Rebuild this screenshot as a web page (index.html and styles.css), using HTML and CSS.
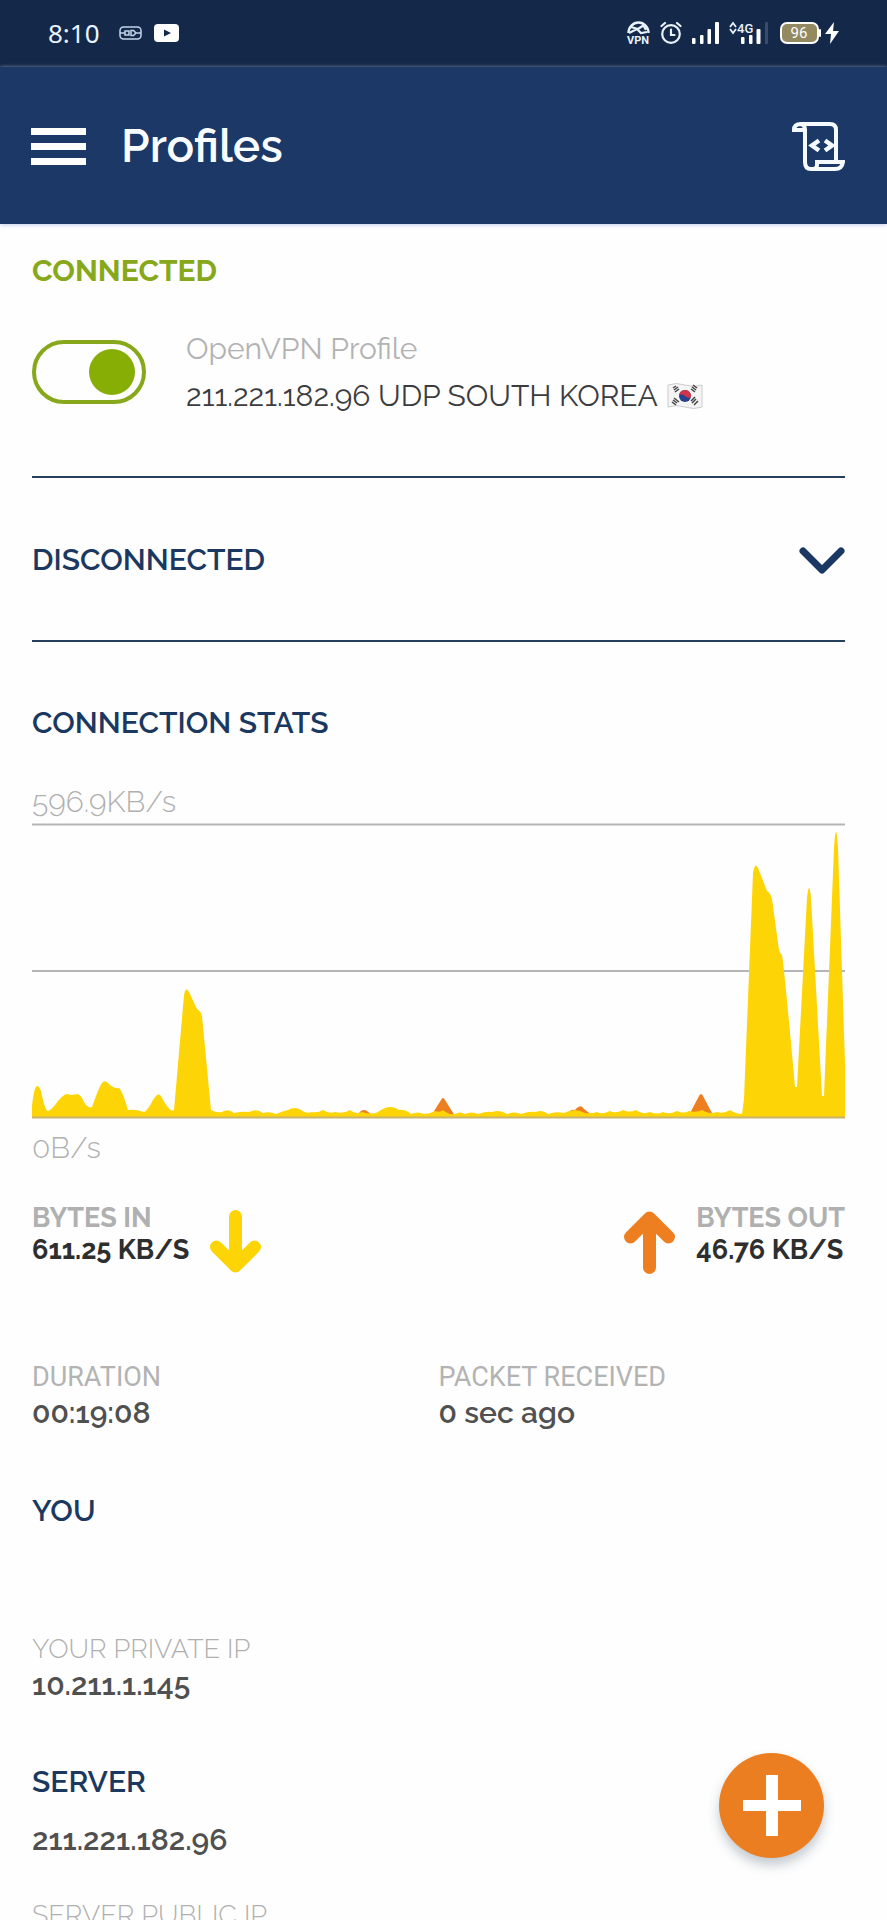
FILE: index.html
```
<!DOCTYPE html>
<html lang="en">

<head>
  <meta charset="UTF-8" />
  <meta name="viewport" content="width=device-width, initial-scale=1" />
  <title>Profiles</title>
  <link rel="stylesheet" href="styles.css">
</head>

<body>

  <div class="app">
    <!-- Phone status bar -->
    <div class="statusbar">
      <div class="status-group status-left">
        <span class="clock">8:10</span>
        <svg width="23" height="14" viewBox="0 0 23 14" fill="none" stroke="#c3d5ea" stroke-width="1.5">
          <rect x="1" y="1" width="21" height="12" rx="3.5" />
          <path d="M1 7h5M17 7h5M6 5h4v4H6zM12 4.500h2.500l2.500 2.500-2.500 2.500H12z" />
        </svg>
        <svg width="25" height="18" viewBox="0 0 25 18">
          <rect width="25" height="18" rx="4" fill="#fff" />
          <path d="M10 5.500v7l7-3.500z" fill="#14294a" />
        </svg>
      </div>
      <div class="status-group status-right">
        <svg class="icon-vpn" width="23" height="24" viewBox="0 0 23 24">
          <path d="M1.500 12a10 10.500 0 0 1 20 0" fill="none" stroke="#e9f2fb" stroke-width="2.400" />
          <path d="M4 6l7 2 6-4M2 12l8-4 4 4 6-1M16 4l3 5" fill="none" stroke="#e9f2fb" stroke-width="2.200" />
          <text class="vpn-text" x="11" y="23" text-anchor="middle">VPN</text>
        </svg>
        <svg width="22" height="24" viewBox="0 0 22 24" fill="none" stroke="#e9f2fb" stroke-width="2.200" stroke-linecap="round">
          <circle cx="11" cy="13" r="8.800" />
          <path d="M11 8.500V14h3.500M1.500 5l3.500-3M20.500 5L17 2" />
        </svg>
        <svg width="27" height="23" viewBox="0 0 27 23" fill="#fff">
          <rect x="0" y="16" width="3.500" height="6" rx="1" />
          <rect x="8" y="13" width="3.500" height="9" rx="1" />
          <rect x="15.500" y="7" width="3.500" height="15" rx="1" />
          <rect x="23" y="0" width="4" height="22" rx="1" />
        </svg>
        <svg width="39" height="24" viewBox="0 0 39 24" fill="#fff">
          <path d="M1 6l3-4 3 4M1 8l3 4 3-4" fill="none" stroke="#e9f2fb" stroke-width="1.800" />
          <text class="net-text" x="8" y="12">4G</text>
          <rect x="12" y="16" width="3.500" height="7" rx="1" />
          <rect x="20" y="14" width="3.500" height="9" rx="1" />
          <rect x="27.500" y="8" width="4" height="15" rx="1" />
          <rect x="36" y="1" width="3" height="22" rx="1" fill="#3a4c6b" />
        </svg>
        <svg class="icon-battery" width="41" height="22" viewBox="0 0 41 22">
          <rect x="1" y="1" width="37" height="20" rx="6" fill="#938a62" stroke="#fff" stroke-width="2" />
          <rect x="39" y="7" width="2" height="8" rx="1" fill="#fff" />
          <text class="battery-text" x="19" y="16" text-anchor="middle">96</text>
        </svg>
        <svg class="icon-bolt" width="14" height="24" viewBox="0 0 14 24">
          <path d="M9 1L0 13h6l-1 10 9-13H8z" fill="#fff" />
        </svg>
      </div>
    </div>

    <header class="topbar">
      <button class="icon-btn" aria-label="Menu">
        <svg width="55" height="37" viewBox="0 0 55 37" fill="#fff">
          <rect y="0" width="55" height="7" />
          <rect y="15" width="55" height="7" />
          <rect y="30" width="55" height="7" />
        </svg>
      </button>
      <h1 class="title">Profiles</h1>
      <button class="icon-btn script-btn" aria-label="Log">
        <svg width="53" height="49" viewBox="0 0 53 49" fill="none" stroke="#f5faff" stroke-width="4">
          <path d="M13 7V40q0 7 6 7h24q7 0 8-7H25v3q0 4-5 4" />
          <path d="M13 8H2q0-6 7-6h29q6 0 6 6v31M9 2q4 1 4 6" />
          <path d="M27 18.500l-7 5 7 5M33 18.500l7 5-7 5" stroke-width="4.500" />
        </svg>
      </button>
    </header>

    <main class="content">
      <section class="connected">
        <h2 class="heading heading-green">CONNECTED</h2>
        <div class="profile">
          <input class="toggle" type="checkbox" id="vpn" checked>
          <label class="profile-text" for="vpn">
            <span class="profile-type">OpenVPN Profile</span>
            <span class="profile-name">211.221.182.96 UDP SOUTH KOREA
              <svg width="36" height="26" viewBox="0 0 36 26">
                <path d="M1 2q8-3 17 0t17 0v22q-8 3-17 0t-17 0z" fill="#f5f5f5" stroke="#ccc" />
                <circle cx="18" cy="13" r="6" fill="#26418f" />
                <path d="M12 12a6 6 0 0 1 12 2q-3 2-6-1t-6-1z" fill="#d23548" />
                <path d="M7 7l4-3M8 9l4-3M6 5l3-2M25 4l4 3M24 6l4 3M26 2l4 3M6 17l4 3M7 15l5 4M5 19l4 3M25 20l4-4M24 18l4-4M27 22l4-4" stroke="#444" stroke-width="1.500" />
              </svg>
            </span>
          </label>
        </div>
      </section>

      <section class="disconnected">
        <h2 class="heading">DISCONNECTED</h2>
        <button class="icon-btn" aria-label="Show disconnected profiles">
          <svg width="46" height="28" viewBox="0 0 46 28" fill="none" stroke="#1b3865" stroke-width="7" stroke-linecap="round" stroke-linejoin="round">
            <path d="M4 5l19 19L42 5" />
          </svg>
        </button>
      </section>

      <section class="stats">
        <h2 class="heading">CONNECTION STATS</h2>
        <div class="scale scale-max">596.9KB/s</div>
        <svg class="chart" viewBox="0 0 813 296" preserveAspectRatio="none" role="img" aria-label="Traffic chart">
          <path d="M0 1.500H813M0 148H813" stroke="#b5b5b5" stroke-width="2" />
          <!-- Bytes out -->
          <path d="M325 292L329 288Q332 286 335 288L340 292ZM399 293L409 277Q411 273 413 277L423 293ZM534 292Q538 286 543 287Q549 280 552 286L560 292ZM657 292L667 273Q669 269 671 273L681 292Z" fill="#ee7f20" />
          <!-- Bytes in -->
          <path d="M0 294V283Q2 264 5 263Q7 263 9 268Q13 288 16 288Q19 287 23 282Q31 271 35 271L39 272L46 271Q49 272 52 279Q56 286 60 284Q67 264 70 260Q73 256 77 261Q82 266 87 265Q90 267 96 287Q103 286 112 289Q116 287 121 277Q127 267 130 275Q138 290 142 287L152 172Q154 163 157 169L165 186Q169 188 170 193L179 287Q185 290 190 289Q196 285 202 290Q211 288 217 289Q225 285 231 290Q238 288 244 291Q251 288 256 287Q263 283 269 287Q274 291 280 289Q286 290 291 287Q297 291 303 289Q312 291 318 287Q324 292 330 289Q340 292 346 289Q358 280 367 287Q373 286 379 291Q386 288 392 291Q398 291 403 288Q408 290 411 287Q416 292 423 291Q428 288 433 291Q440 288 446 291Q455 288 460 289Q468 286 475 291Q483 288 489 291Q498 288 504 289Q510 286 516 291Q524 288 532 290Q540 286 548 288Q555 292 565 289Q570 292 578 288Q584 291 591 287Q597 290 604 287Q610 292 618 289Q625 292 631 289Q637 292 645 288Q652 291 657 288Q665 290 670 287Q677 292 685 289Q692 291 698 287Q704 291 710 291L712 276L721 50Q723 38 726 45L735 68Q738 69 740 76L747 127Q748 131 750 132Q752 142 763 264H765L775 75Q777 55 779 75L790 273H792L802 25Q804-7 806 25L813 240V294Z" fill="#fdd506" />
          <path d="M0 294.500H813" stroke="#c9b36b" stroke-width="2" />
        </svg>
        <div class="scale scale-min">0B/s</div>

        <div class="bytes">
          <div class="bytes-item">
            <div class="bytes-text">
              <div class="bytes-label">BYTES IN</div>
              <div class="bytes-value">611.25 KB/S</div>
            </div>
            <svg class="arrow" width="51" height="64" viewBox="0 0 51 64" fill="none" stroke="#fdd506" stroke-width="13" stroke-linecap="round" stroke-linejoin="round">
              <path d="M25.500 6.500V55M6.500 37L25.500 56L44.500 37M20 46h11" />
            </svg>
          </div>
          <div class="bytes-item">
            <svg class="arrow" width="51" height="64" viewBox="0 0 51 64" fill="none" stroke="#ee7f20" stroke-width="13" stroke-linecap="round" stroke-linejoin="round">
              <path d="M25.500 57.500V9M6.500 27L25.500 8L44.500 27M20 18h11" />
            </svg>
            <div class="bytes-text">
              <div class="bytes-label">BYTES OUT</div>
              <div class="bytes-value">46.76 KB/S</div>
            </div>
          </div>
        </div>

        <div class="details">
          <div>
            <div class="detail-label">DURATION</div>
            <div class="detail-value">00:19:08</div>
          </div>
          <div>
            <div class="detail-label">PACKET RECEIVED</div>
            <div class="detail-value">0 sec ago</div>
          </div>
        </div>
      </section>

      <section class="you">
        <h2 class="heading">YOU</h2>
        <div class="ip-label">YOUR PRIVATE IP</div>
        <div class="detail-value">10.211.1.145</div>
      </section>

      <section class="server">
        <h2 class="heading">SERVER</h2>
        <div class="detail-value server-ip">211.221.182.96</div>
        <div class="ip-label">SERVER PUBLIC IP</div>
      </section>
    </main>

    <button class="fab" aria-label="Add profile">
      <svg width="58" height="61" viewBox="0 0 58 61" fill="#fff">
        <rect x="23" width="12" height="61" />
        <rect y="25" width="58" height="11" />
      </svg>
    </button>
  </div>

</body>

</html>
```
FILE: styles.css
```
* {
  box-sizing: border-box;
}

body {
  margin: 0;
  background: #fefefe;
  color: #333;
  font-family: Raleway, Lato, sans-serif;
}

h1,
h2 {
  margin: 0;
}

svg {
  display: block;
  flex: none;
}

.app {
  display: flex;
  flex-direction: column;
  height: 100vh;
}

/* Status bar */
.statusbar {
  display: flex;
  justify-content: space-between;
  flex: none;
  padding: 15px 48px 16px;
  background: #14294a;
}

.status-group {
  display: flex;
  align-items: center;
  height: 36px;
}

.status-left {
  gap: 12px;
}

.status-right {
  gap: 10px;
}

.clock {
  margin-right: 7px;
  color: #eaf4ff;
  font: 26px/36px "Noto Sans", sans-serif;
}

.icon-vpn {
  overflow: visible;
}

.vpn-text {
  fill: #e9f2fb;
  font: bold 11px Roboto, sans-serif;
}

.net-text {
  fill: #e9f2fb;
  font: 500 13px Roboto, sans-serif;
}

.battery-text {
  fill: #fff;
  font: 15px Roboto, sans-serif;
}

.icon-battery {
  margin-left: 2px;
}

.icon-bolt {
  margin-left: -6px;
}

/* Header */
.topbar {
  display: flex;
  align-items: center;
  flex: none;
  padding: 51px 42px 50px 31px;
  background: #1b3866;
  box-shadow: 0 1px 4px #c5cdf0;
}

.icon-btn {
  padding: 0;
  border: none;
  background: none;
  cursor: pointer;
}

.title {
  margin-left: 35px;
  color: #f8fcff;
  font-size: 46px;
  font-weight: 600;
  line-height: 56px;
}

.script-btn {
  margin-left: auto;
}

/* Content */
.content {
  flex: 1;
  min-height: 0;
  padding: 29px 42px 0 32px;
  overflow-y: auto;
  scrollbar-width: none;
}

.heading {
  color: #1b3860;
  font-size: 30px;
  font-weight: 600;
  line-height: 36px;
}

.heading-green {
  color: #87a81a;
  font-weight: 700;
}

.connected {
  padding-bottom: 57px;
  border-bottom: 2px solid #263f5c;
}

.profile {
  display: flex;
  align-items: center;
  gap: 40px;
  margin-top: 36px;
}

.toggle {
  display: flex;
  align-items: center;
  justify-content: flex-end;
  flex: none;
  width: 114px;
  height: 64px;
  margin: 0;
  padding-right: 7px;
  border: 4px solid #87a81a;
  border-radius: 32px;
  appearance: none;
}

.toggle::before {
  content: "";
  width: 46px;
  height: 46px;
  border-radius: 50%;
  background: #86ae05;
}

.toggle:not(:checked) {
  justify-content: flex-start;
  padding: 0 0 0 7px;
}

.profile-text {
  font-size: 30px;
  line-height: 47px;
}

.profile-type {
  display: block;
  color: #b3b3b3;
}

.profile-name {
  display: flex;
  align-items: center;
  gap: 9px;
  color: #3c3c3e;
}

.disconnected {
  display: flex;
  align-items: center;
  justify-content: space-between;
  padding: 64px 0 62px;
  border-bottom: 2px solid #263f5c;
}

.stats {
  padding-top: 63px;
}

.scale {
  color: #b0b0b0;
  font-size: 30px;
  font-weight: 300;
  line-height: 36px;
}

.scale-max {
  margin-top: 43px;
}

.scale-min {
  margin-top: 11px;
}

.chart {
  width: 100%;
  height: 296px;
  margin-top: 3px;
}

.bytes {
  display: flex;
  justify-content: space-between;
  margin-top: 36px;
  font-size: 27px;
  font-weight: 700;
  line-height: 32px;
}

.bytes-item {
  display: flex;
  gap: 21px;
}

.arrow {
  margin-top: 8px;
}

.bytes-label {
  color: #b0b0b0;
}

.bytes-value {
  color: #2e2e2e;
}

.details {
  display: grid;
  grid-template-columns: 1fr 1fr;
  margin-top: 85px;
}

.detail-label {
  color: #b3b3b3;
  font-family: Roboto, sans-serif;
  font-size: 27px;
  font-weight: 400;
  line-height: 36px;
}

.detail-value {
  color: #505050;
  font-size: 30px;
  font-weight: 600;
  line-height: 36px;
}

.ip-label {
  color: #b0b0b0;
  font-size: 27px;
  font-weight: 300;
  line-height: 36px;
}

.you {
  padding-top: 62px;
}

.you .ip-label {
  margin-top: 102px;
}

.server {
  padding-top: 61px;
}

.server-ip {
  margin: 22px 0 39px;
}

/* Floating add button */
.fab {
  position: fixed;
  right: 63px;
  bottom: 62px;
  display: flex;
  align-items: center;
  justify-content: center;
  width: 105px;
  height: 105px;
  padding: 0;
  border: none;
  border-radius: 50%;
  background: #ec7e22;
  box-shadow: 0 7px 12px rgba(60, 80, 100, 0.3);
  cursor: pointer;
}
```
